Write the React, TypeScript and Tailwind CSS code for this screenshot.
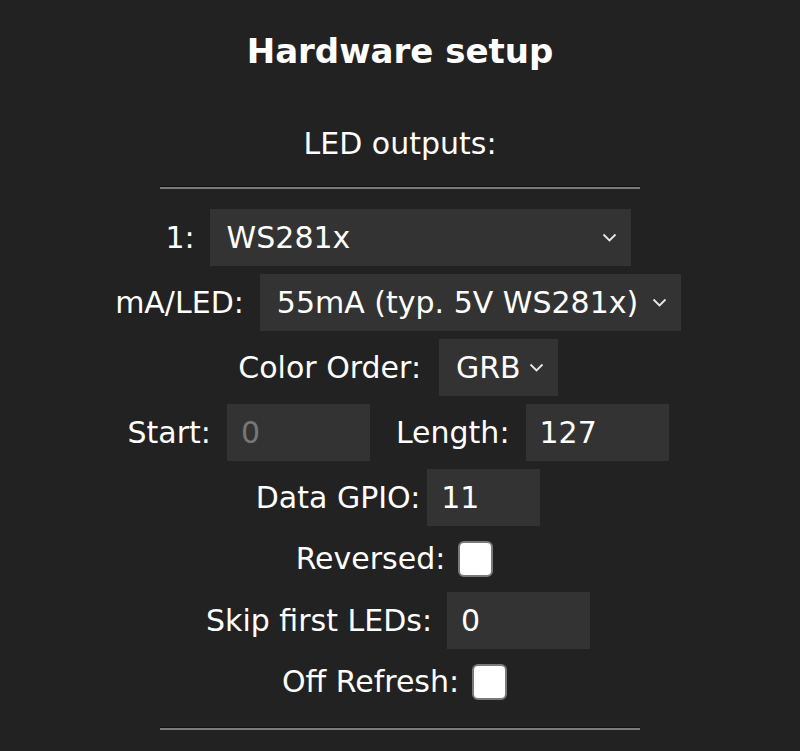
import React from "react";

const Chevron = () => (
  <svg width="15" height="9" viewBox="0 0 15 9" className="shrink-0">
    <path d="M1.5 1.5 L7.5 7.5 L13.5 1.5" fill="none" stroke="#e8e8e8" strokeWidth="1.8" />
  </svg>
);

const Select: React.FC<{ value: string; className?: string }> = ({ value, className = "" }) => (
  <div className={`flex items-center h-[57px] bg-[#333333] pl-[17px] pr-[14px] mr-[4px] ${className}`}>
    <span className="whitespace-nowrap">{value}</span>
    <span className="ml-auto pl-[8px] flex items-center">
      <Chevron />
    </span>
  </div>
);

const Field: React.FC<{ value: string; width: string; muted?: boolean }> = ({ value, width, muted }) => (
  <div
    className={`flex items-center h-[57px] bg-[#333333] pl-[14px] mr-[4px] ${width} ${
      muted ? "text-[#777777]" : "text-white"
    }`}
  >
    {value}
  </div>
);

const Check = () => (
  <div className="w-[35px] h-[36px] rounded-[6px] border-2 border-[#7a7a7a] bg-white mr-[11px]" />
);

const Hr = () => (
  <div className="mx-auto w-[480px] border-t border-t-[#111111] border-b-2 border-b-[#7a7a7a]" />
);

const Row: React.FC<{ children: React.ReactNode; tall?: boolean }> = ({ children, tall = true }) => (
  <div className={`flex items-center justify-center ${tall ? "h-[57px]" : "h-[50px]"} mb-[8px]`}>
    {children}
  </div>
);

export default function App() {
  return (
    <div className="min-h-[751px] bg-[#222222] text-white text-[30px] leading-[36px] font-['DejaVu_Sans',Verdana,sans-serif] overflow-hidden">
      <h2 className="pt-[31px] text-center text-[34px] leading-[40px] font-bold">Hardware setup</h2>
      <p className="mt-[55px] text-center">LED outputs:</p>
      <div className="mt-[24px]">
        <Hr />
      </div>

      <div className="mt-[20px]">
        <Row>
          <span className="mr-[15px]">1:</span>
          <Select value="WS281x" className="w-[421px]" />
        </Row>
        <Row>
          <span className="mr-[16px]">mA/LED:</span>
          <Select value="55mA (typ. 5V WS281x)" className="w-[421px]" />
        </Row>
        <Row>
          <span className="mr-[18px]">Color Order:</span>
          <Select value="GRB" />
        </Row>
        <Row>
          <span className="mr-[16px]">Start:</span>
          <Field value="0" width="w-[143px]" muted />
          <span className="ml-[22px] mr-[16px]">Length:</span>
          <Field value="127" width="w-[143px]" />
        </Row>
        <Row>
          <span className="mr-[7px]">Data GPIO:</span>
          <Field value="11" width="w-[113px]" />
        </Row>
        <Row tall={false}>
          <span className="mr-[13px]">Reversed:</span>
          <Check />
        </Row>
        <Row>
          <span className="mr-[15px]">Skip first LEDs:</span>
          <Field value="0" width="w-[143px]" />
        </Row>
        <Row tall={false}>
          <span className="mr-[13px]">Off Refresh:</span>
          <Check />
        </Row>
      </div>

      <div className="mt-[20px]">
        <Hr />
      </div>
    </div>
  );
}
